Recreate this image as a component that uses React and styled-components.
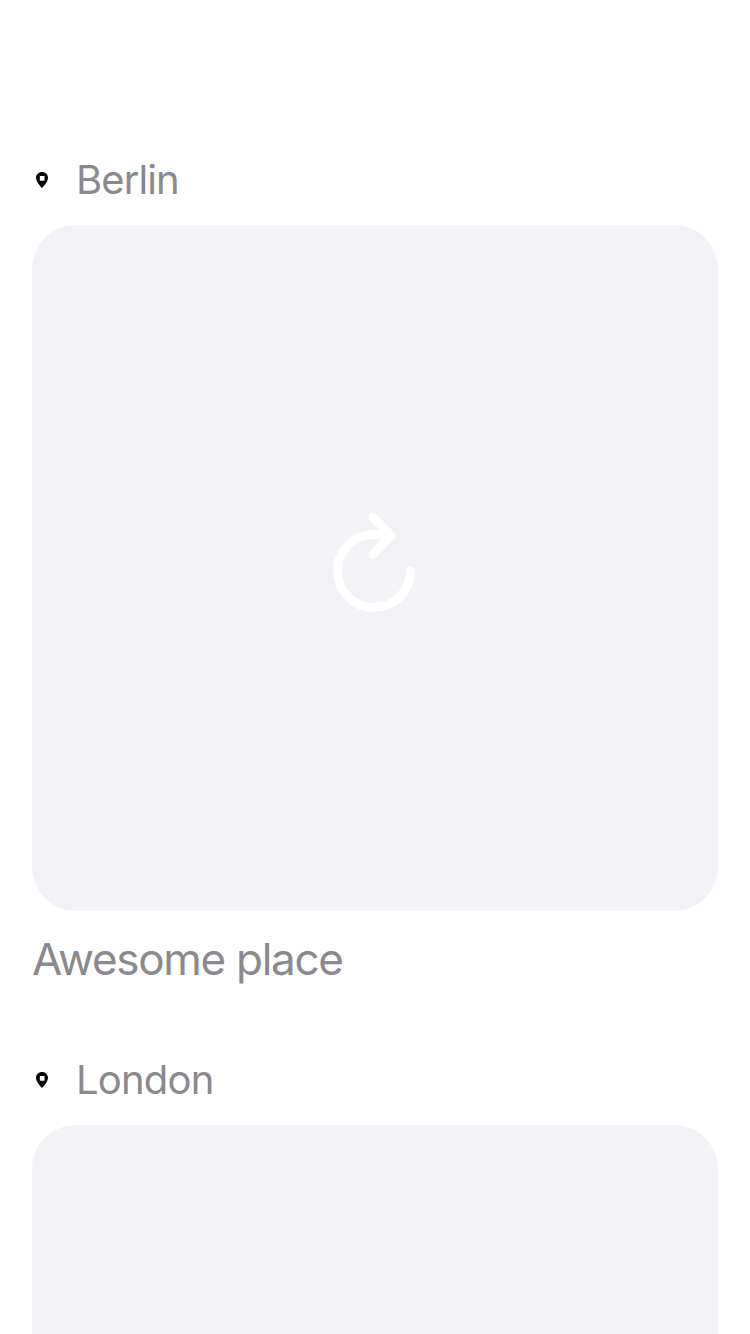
import React from "react";
import styled, { createGlobalStyle } from "styled-components";

const GlobalStyle = createGlobalStyle`
  body { margin: 0; background: #fff; overflow: hidden; }
  * { box-sizing: border-box; }
`;

const Feed = styled.main`
  display: flex;
  flex-direction: column;
  height: 1334px;
  overflow: hidden;
  padding: 135px 32px 0;
  font-family: Inter, "Liberation Sans", sans-serif;
  color: #8a8a8e;
`;

const Post = styled.article`
  flex: none;
  height: 900px;
`;

const Location = styled.header`
  display: flex;
  align-items: center;
  height: 90px;
  padding-left: 4px;
`;

const PinIcon = styled.svg`
  flex: none;
  width: 12px;
  height: 16px;
  margin-right: 28px;
`;

const City = styled.span`
  font-size: 40px;
  line-height: 48px;
  letter-spacing: ${(p) => p.$tracking}px;
`;

const Photo = styled.div`
  display: flex;
  align-items: center;
  justify-content: center;
  height: 686px;
  border-radius: 44px;
  background: #f2f2f7;
`;

const ReloadIcon = styled.svg`
  width: 84px;
  height: 100px;
  margin: -12px 2px 0 0;
`;

const Caption = styled.p`
  margin: 21px 0 0;
  font-size: 44px;
  line-height: 54px;
  letter-spacing: -1.3px;
`;

function Pin() {
  return (
    <PinIcon viewBox="0 0 12 16">
      <path
        fillRule="evenodd"
        d="M6 0C2.7 0 0 2.6 0 5.9C0 10 6 16 6 16S12 10 12 5.9C12 2.6 9.3 0 6 0ZM3.8 4.1H8.5V8.8H3.8Z"
      />
    </PinIcon>
  );
}

function Reload() {
  return (
    <ReloadIcon viewBox="0 0 84 100" fill="none" stroke="#fff" strokeWidth="9" strokeLinecap="round" strokeLinejoin="round">
      <path d="M78.5 59A36.5 36.5 0 1 1 42 22.5H58" />
      <path d="M41 5.3L59.3 23.7L41 42.2" />
    </ReloadIcon>
  );
}

const posts = [
  { city: "Berlin", caption: "Awesome place", tracking: -0.9 },
  { city: "London", tracking: -0.8 },
];

export default function App() {
  return (
    <>
      <GlobalStyle />
      <Feed>
        {posts.map((post) => (
          <Post key={post.city}>
            <Location>
              <Pin />
              <City $tracking={post.tracking}>{post.city}</City>
            </Location>
            <Photo><Reload /></Photo>
            {post.caption && <Caption>{post.caption}</Caption>}
          </Post>
        ))}
      </Feed>
    </>
  );
}
